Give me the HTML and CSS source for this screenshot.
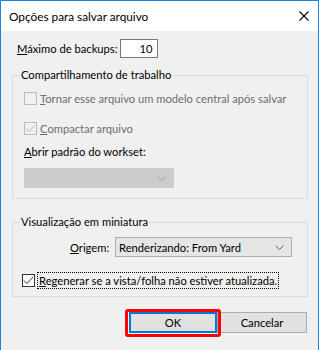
FILE: index.html
```html
<!DOCTYPE html>
<html lang="pt">
<head>
<meta charset="utf-8">
<link rel="stylesheet" href="styles.css">
</head>
<body>
<div class="window">
  <div class="titlebar">
    <span class="title">Opções para salvar arquivo</span>
    <svg class="close" width="10" height="10" viewBox="0 0 10 10"><path d="M0.5 0.5L9.5 9.5M9.5 0.5L0.5 9.5" stroke="#000" stroke-width="1.1" fill="none"/></svg>
  </div>
  <div class="body">
    <div class="backups">
      <span class="label"><u>M</u>áximo de backups:</span>
      <span class="numbox">10</span>
    </div>

    <fieldset class="group group-work">
      <legend>Compartilhamento de trabalho</legend>
      <div class="check-row disabled">
        <span class="box"></span>
        <span class="text"><u>T</u>ornar esse arquivo um modelo central após salvar</span>
      </div>
      <div class="check-row disabled row-compact">
        <span class="box"><svg width="11" height="11" viewBox="0 0 11 11"><path d="M1 5.5L4 8.5L10 2" stroke="#bcbcbc" stroke-width="1" fill="none"/></svg></span>
        <span class="text"><u>C</u>ompactar arquivo</span>
      </div>
      <div class="field-label"><u>A</u>brir padrão do workset:</div>
      <div class="combo combo-disabled">
        <svg class="chev" width="9" height="5" viewBox="0 0 9 5"><path d="M0.5 0.5L4.5 4.5L8.5 0.5" stroke="#a0a0a0" fill="none"/></svg>
      </div>
    </fieldset>

    <fieldset class="group group-thumb">
      <legend>Visualização em miniatura</legend>
      <div class="origin-row">
        <span class="origin-label"><u>O</u>rigem:</span>
        <div class="combo combo-origin">
          <span class="combo-text">Renderizando: From Yard</span>
          <svg class="chev" width="9" height="5" viewBox="0 0 9 5"><path d="M0.5 0.5L4.5 4.5L8.5 0.5" stroke="#606060" fill="none"/></svg>
        </div>
      </div>
      <div class="check-row regen">
        <span class="box box-on"><svg width="11" height="11" viewBox="0 0 11 11"><path d="M1 5.5L4 8.5L10 2" stroke="#333" stroke-width="1" fill="none"/></svg></span>
        <span class="text focus"><u>R</u>egenerar se a vista/folha não estiver atualizada.</span>
      </div>
    </fieldset>

    <div class="buttons">
      <button class="btn btn-ok">OK<span class="mark"></span></button>
      <button class="btn btn-cancel">Cancelar</button>
    </div>
  </div>
</div>
</body>
</html>
```
FILE: styles.css
```css
* { box-sizing: border-box; }
html, body { margin: 0; padding: 0; }
body {
  font-family: Lato, "Noto Sans", sans-serif;
  font-size: 11.2px;
  color: #000;
  background: #f0f0f0;
  white-space: nowrap;
}
.window {
  width: 319px;
  height: 350px;
  border: 1px solid #1883d7;
  border-bottom: none;
  background: #f0f0f0;
  display: flex;
  flex-direction: column;
}
.titlebar {
  height: 30px;
  background: #fff;
  display: flex;
  align-items: center;
  justify-content: space-between;
  padding: 0 9px 0 8px;
  flex: none;
}
.title { font-size: 11.8px; }
.close { display: block; }
.body {
  flex: 1;
  padding: 8px 10px 0 11px;
  display: flex;
  flex-direction: column;
}
.backups {
  display: flex;
  align-items: center;
  height: 18px;
  padding-left: 5px;
}
.label { flex: none; margin-right: 2px; }
.numbox {
  width: 38px;
  height: 19px;
  border: 1px solid #7a7a7a;
  background: #fff;
  text-align: right;
  padding-right: 4px;
  line-height: 17px;
}
.group {
  margin: 0;
  border: 1px solid #dcdcdc;
  min-width: 0;
}
.group legend {
  padding: 0 1px;
  line-height: 16px;
}
.group-work {
  margin-top: 10px;
  padding: 5px 11px 10px 11px;
}
.group-work legend { margin-left: -4px; }
.group-thumb {
  margin-top: 15px;
  padding: 7px 9px 6px 9px;
}
.group-thumb legend { margin-left: -2px; }
.check-row {
  display: flex;
  align-items: center;
  height: 20px;
}
.row-compact { margin-top: 10px; }
.disabled { color: #6d6d6d; }
.box {
  width: 13px;
  height: 13px;
  border: 1px solid #333;
  background: #fff;
  flex: none;
  margin-right: 3px;
  display: flex;
  align-items: center;
  justify-content: center;
}
.disabled .box { border-color: #bcbcbc; background: #f0f0f0; }
.field-label { margin-top: 4px; height: 20px; line-height: 20px; }
.combo {
  height: 20px;
  display: flex;
  align-items: center;
  justify-content: space-between;
}
.combo-disabled {
  margin-top: 6px;
  width: 150px;
  background: #cccccc;
  border: 1px solid #cccccc;
  justify-content: flex-end;
  padding-right: 7px;
}
.origin-row {
  display: flex;
  align-items: center;
  height: 20px;
}
.origin-label { margin-left: 48px; width: 45px; }
.combo-origin {
  width: 177px;
  background: #e5e5e5;
  border: 1px solid #adadad;
  padding: 0 7px 0 3px;
}
.regen { margin-top: 13px; }
.focus {
  outline: 1px dotted #000;
  outline-offset: 0;
  padding: 0 1px;
  line-height: 15px;
}
.buttons {
  margin-top: 15px;
  display: flex;
  justify-content: flex-end;
  padding-right: 1px;
}
.btn {
  font-family: inherit;
  font-size: 11.2px;
  height: 21px;
  background: #e1e1e1;
  border: 1px solid #adadad;
  padding: 0;
  color: #000;
}
.btn-ok {
  width: 88px;
  position: relative;
  border: 2px solid #0078d7;
}
.btn-cancel { width: 90px; }
.mark {
  position: absolute;
  left: -6px;
  top: -5px;
  right: -6px;
  bottom: -6px;
  border: 3px solid #ff0000;
  border-radius: 3px;
}
```
